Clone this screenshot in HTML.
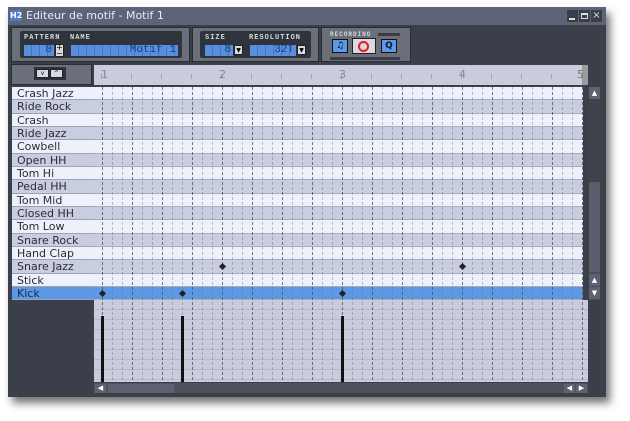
<!DOCTYPE html>
<html><head><meta charset="utf-8"><style>
*{margin:0;padding:0;box-sizing:border-box}
body{width:630px;height:421px;background:#fff;position:relative;overflow:hidden;font-family:"DejaVu Sans","Liberation Sans",sans-serif}
.a{position:absolute}
.win{left:8px;top:7px;width:598px;height:390px;background:#3b3f4a;box-shadow:4px 6px 8px rgba(0,0,0,.55)}
.title{left:8px;top:7px;width:598px;height:18px;background:#5d6479;color:#e8ebf2;font-size:11px;line-height:18px;padding-left:18px}
.frame{background:#6b6f7a;border:1px solid #2a2d33}
.inner{background:#2f333b;border-radius:2px}
.lbl{color:#d6d8de;font-size:7px;font-weight:bold;letter-spacing:1px;font-family:"Liberation Mono",monospace}
.lcd{background:repeating-linear-gradient(90deg,#5a8ede 0 7px,#4678c8 7px 8px);color:#1d3f7a;font-family:"Liberation Mono",monospace;font-size:11px;line-height:11px;text-align:right;padding-right:2px}
.btn{background:#d8dae0;border:1px solid #222}
.row{position:absolute;left:12px;width:82px;height:13.33px;font-size:11px;line-height:13px;padding-left:5px;color:#2a2d36;border-bottom:1px solid #9da2b4}
.g{position:absolute;left:94px;width:489px;height:13.33px;border-bottom:1px solid #a8adbf}
.l{background:#eef1fb}.d{background:#c9cde0}
.dm{position:absolute;width:5px;height:5px;background:#222;transform:rotate(45deg)}
</style></head><body>
<div class="a win"></div>
<div class="a title">Editeur de motif - Motif 1</div>
<div class="a" style="left:10px;top:10px;width:11px;height:11px;background:#4f7ccc;color:#fff;font-size:8px;font-weight:bold;line-height:11px">H2</div>
<div class="a" style="left:567px;top:10px;width:11px;height:12px;background:#3a3e48"></div>
<div class="a" style="left:579px;top:10px;width:11px;height:12px;background:#3a3e48"></div>
<div class="a" style="left:591px;top:10px;width:11px;height:12px;background:#3a3e48;color:#ddd;font-size:10px;line-height:12px;text-align:center">×</div>
<div class="a" style="left:569px;top:18px;width:6px;height:2px;background:#ddd"></div>
<div class="a" style="left:581px;top:13px;width:7px;height:6px;border:1px solid #ddd;border-top-width:2px"></div>

<div class="a frame" style="left:11px;top:27px;width:179px;height:35px"></div>
<div class="a inner" style="left:20px;top:31px;width:162px;height:27px"></div>
<div class="a lbl" style="left:24px;top:34px">PATTERN</div>
<div class="a lbl" style="left:70px;top:34px">NAME</div>
<div class="a lcd" style="left:24px;top:45px;width:30px;height:11px">0</div>
<div class="a btn" style="left:55px;top:44px;width:9px;height:13px;font-size:8px;line-height:6px;text-align:center">+<br>−</div>
<div class="a lcd" style="left:71px;top:45px;width:107px;height:11px">Motif 1</div>

<div class="a frame" style="left:192px;top:27px;width:127px;height:35px"></div>
<div class="a inner" style="left:200px;top:31px;width:111px;height:27px"></div>
<div class="a lbl" style="left:205px;top:34px">SIZE</div>
<div class="a lbl" style="left:249px;top:34px">RESOLUTION</div>
<div class="a lcd" style="left:205px;top:45px;width:28px;height:11px">8</div>
<div class="a btn" style="left:234px;top:45px;width:9px;height:10px;font-size:6px;line-height:9px;text-align:center">▼</div>
<div class="a lcd" style="left:250px;top:45px;width:46px;height:11px">32T</div>
<div class="a btn" style="left:297px;top:45px;width:9px;height:10px;font-size:6px;line-height:9px;text-align:center">▼</div>

<div class="a frame" style="left:321px;top:27px;width:90px;height:35px"></div>
<div class="a lbl" style="left:330px;top:31px;font-size:6px">RECORDING</div>
<div class="a" style="left:378px;top:33px;width:22px;height:3px;background:#3a3d44"></div>
<div class="a" style="left:330px;top:57px;width:70px;height:3px;background:#3a3d44"></div>
<div class="a" style="left:332px;top:39px;width:16px;height:14px;background:#5a9ae8;border:1px solid #111;font-size:9px;text-align:center;line-height:12px">♫</div>
<div class="a btn" style="left:352px;top:38px;width:24px;height:16px"></div>
<div class="a" style="left:358px;top:41px;width:11px;height:11px;border:2px solid #e02020;border-radius:50%"></div>
<div class="a" style="left:381px;top:39px;width:16px;height:14px;background:#5a9ae8;border:1px solid #111;font-size:9px;font-weight:bold;text-align:center;line-height:12px;color:#112">Q</div>

<div class="a frame" style="left:11px;top:64px;width:81px;height:21px"></div>
<div class="a" style="left:34px;top:67px;width:32px;height:13px;background:#2f333b"></div>
<div class="a btn" style="left:36px;top:69px;width:13px;height:9px;font-size:6px;text-align:center;line-height:8px">v</div>
<div class="a btn" style="left:50px;top:69px;width:13px;height:9px;font-size:6px;text-align:center;line-height:8px">^</div>
<div class="a" style="left:94px;top:65px;width:494px;height:20px;background:#c9ccdc"></div>
<div class="a" style="left:582px;top:65px;width:6px;height:20px;background:#9a9ca0"></div>
<div class="a" style="left:94px;top:74px;width:488px;height:5px;background:repeating-linear-gradient(90deg,transparent 0 7px,#a0a3b0 7px 8px,transparent 8px 30px)"></div>
<div class="a" style="left:101px;top:68px;font-size:11px;color:#888">1</div>
<div class="a" style="left:219px;top:68px;font-size:11px;color:#888">2</div>
<div class="a" style="left:339px;top:68px;font-size:11px;color:#888">3</div>
<div class="a" style="left:459px;top:68px;font-size:11px;color:#888">4</div>
<div class="a" style="left:577px;top:68px;font-size:11px;color:#777">5</div>

<div class="row l" style="top:87px">Crash Jazz</div><div class="g l" style="top:87px"></div>
<div class="row d" style="top:100.3px">Ride Rock</div><div class="g d" style="top:100.3px"></div>
<div class="row l" style="top:113.7px">Crash</div><div class="g l" style="top:113.7px"></div>
<div class="row d" style="top:127px">Ride Jazz</div><div class="g d" style="top:127px"></div>
<div class="row l" style="top:140.3px">Cowbell</div><div class="g l" style="top:140.3px"></div>
<div class="row d" style="top:153.7px">Open HH</div><div class="g d" style="top:153.7px"></div>
<div class="row l" style="top:167px">Tom Hi</div><div class="g l" style="top:167px"></div>
<div class="row d" style="top:180.3px">Pedal HH</div><div class="g d" style="top:180.3px"></div>
<div class="row l" style="top:193.7px">Tom Mid</div><div class="g l" style="top:193.7px"></div>
<div class="row d" style="top:207px">Closed HH</div><div class="g d" style="top:207px"></div>
<div class="row l" style="top:220.3px">Tom Low</div><div class="g l" style="top:220.3px"></div>
<div class="row d" style="top:233.7px">Snare Rock</div><div class="g d" style="top:233.7px"></div>
<div class="row l" style="top:247px">Hand Clap</div><div class="g l" style="top:247px"></div>
<div class="row d" style="top:260.3px">Snare Jazz</div><div class="g d" style="top:260.3px"></div>
<div class="row l" style="top:273.7px">Stick</div><div class="g l" style="top:273.7px"></div>
<div class="row" style="top:287px;background:#5d98e4;color:#1c2a44">Kick</div><div class="g" style="top:287px;background:#5d98e4"></div>

<div class="a" style="left:94px;top:300px;width:494px;height:82px;background:#c9ccdc;background-image:repeating-linear-gradient(180deg,transparent 0 9px,#b5b9cb 9px 10px)"></div>
<div class="a" style="left:94px;top:87px;width:489px;height:295px;background:repeating-linear-gradient(90deg,transparent 0 8px,rgba(110,115,130,.45) 8px 9px,transparent 9px 10px);-webkit-mask:repeating-linear-gradient(180deg,#000 0 3px,transparent 3px 5px)"></div>
<div class="a" style="left:94px;top:87px;width:489px;height:295px;background:repeating-linear-gradient(90deg,transparent 0 8px,rgba(70,72,80,.6) 8px 9px,transparent 9px 30px);-webkit-mask:repeating-linear-gradient(180deg,#000 0 3px,transparent 3px 5px)"></div>

<div class="dm" style="left:100px;top:291px"></div>
<div class="dm" style="left:180px;top:291px"></div>
<div class="dm" style="left:340px;top:291px"></div>
<div class="dm" style="left:220px;top:264px"></div>
<div class="dm" style="left:460px;top:264px"></div>
<div class="a" style="left:101px;top:316px;width:3px;height:66px;background:#111"></div>
<div class="a" style="left:181px;top:316px;width:3px;height:66px;background:#111"></div>
<div class="a" style="left:341px;top:316px;width:3px;height:66px;background:#111"></div>

<div class="a" style="left:589px;top:87px;width:11px;height:213px;background:#4a4e5a"></div>
<div class="a" style="left:589px;top:87px;width:11px;height:95px;background:#3f434e"></div>
<div class="a" style="left:589px;top:182px;width:11px;height:90px;background:#5a5e6a"></div>
<div class="a" style="left:589px;top:87px;width:11px;height:12px;background:#5e6270;color:#fff;font-size:7px;text-align:center;line-height:12px">▲</div>
<div class="a" style="left:589px;top:274px;width:11px;height:12px;background:#5e6270;color:#fff;font-size:7px;text-align:center;line-height:12px">▲</div>
<div class="a" style="left:589px;top:287px;width:11px;height:12px;background:#5e6270;color:#fff;font-size:7px;text-align:center;line-height:12px">▼</div>
<div class="a" style="left:94px;top:383px;width:494px;height:10px;background:#4e525e"></div>
<div class="a" style="left:95px;top:384px;width:11px;height:9px;background:#5e6270;color:#fff;font-size:7px;text-align:center;line-height:9px">◀</div>
<div class="a" style="left:108px;top:384px;width:66px;height:9px;background:#5e6270"></div>
<div class="a" style="left:564px;top:384px;width:11px;height:9px;background:#5e6270;color:#fff;font-size:7px;text-align:center;line-height:9px">◀</div>
<div class="a" style="left:576px;top:384px;width:11px;height:9px;background:#5e6270;color:#fff;font-size:7px;text-align:center;line-height:9px">▶</div>
</body></html>
